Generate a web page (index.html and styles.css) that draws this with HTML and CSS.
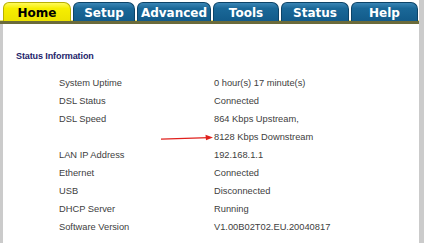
FILE: index.html
```html
<!DOCTYPE html>
<html lang="en">
<head>
    <meta charset="UTF-8">
    <title>ADSL Router - Status</title>
    <link rel="stylesheet" href="styles.css">
</head>
<body>
    <div class="frame">
        <nav class="tabs">
            <a class="tab tab-home" href="#">Home</a>
            <a class="tab tab-setup" href="#">Setup</a>
            <a class="tab tab-advanced" href="#">Advanced</a>
            <a class="tab tab-tools" href="#">Tools</a>
            <a class="tab tab-status" href="#">Status</a>
            <a class="tab tab-help" href="#">Help</a>
        </nav>
        <div class="content">
            <h2 class="section-title">Status Information</h2>
            <div class="info">
                <div class="label">System Uptime</div>
                <div class="value">0 hour(s) 17 minute(s)</div>
                <div class="label">DSL Status</div>
                <div class="value">Connected</div>
                <div class="label">DSL Speed</div>
                <div class="value">864 Kbps Upstream,</div>
                <div class="label">
                    <svg class="arrow" width="54" height="8" viewBox="0 0 54 8">
                        <path d="M1 5.2 L49 3.6" stroke="#e0201c" stroke-width="1.2" fill="none"/>
                        <path d="M53 3.5 L45.5 0.8 L46 6.2 Z" fill="#e0201c"/>
                    </svg>
                </div>
                <div class="value">8128 Kbps Downstream</div>
                <div class="label">LAN IP Address</div>
                <div class="value">192.168.1.1</div>
                <div class="label">Ethernet</div>
                <div class="value">Connected</div>
                <div class="label">USB</div>
                <div class="value">Disconnected</div>
                <div class="label">DHCP Server</div>
                <div class="value">Running</div>
                <div class="label">Software Version</div>
                <div class="value">V1.00B02T02.EU.20040817</div>
            </div>
        </div>
    </div>
</body>
</html>
```

FILE: styles.css
```css
body, html {
    margin: 0;
    padding: 0;
    background-color: #fff;
    height: 100%;
    overflow: hidden;
}

.frame {
    display: flex;
    flex-direction: column;
    height: 100vh;
    border-right: 5px solid #cbcbcb;
    box-sizing: border-box;
}

.tabs {
    display: flex;
    gap: 2px;
    padding: 2px 0 0 3px;
    height: 19px;
    border-bottom: 3px solid #6b6b3a;
    box-shadow: inset 0 -1px 0 #e6e070;
}

.tab {
    display: flex;
    align-items: center;
    justify-content: center;
    font-family: "DejaVu Sans", sans-serif;
    font-weight: bold;
    font-size: 12px;
    color: #fff;
    text-decoration: none;
    background: linear-gradient(#3a86b6, #1a6898 30%, #125b8a);
    border: 1px solid #0c4468;
    border-bottom: none;
    border-radius: 6px 7px 0 0;
    box-sizing: border-box;
    padding-top: 1px;
}

.tab-home {
    width: 68px;
    background: linear-gradient(#fffa5a, #f6ee00 30%, #ece200);
    border-color: #b8b000;
    color: #000;
}

.tab-setup { width: 62px; }
.tab-advanced { width: 74px; }
.tab-tools { width: 66px; }
.tab-status { width: 68px; }
.tab-help { width: 67px; }

.content {
    flex-grow: 1;
    border-left: 3px solid #cbcbcb;
    padding: 26px 0 0 13px;
    font-family: "Liberation Sans", Arial, sans-serif;
}

.section-title {
    margin: 0 0 12px 0;
    font-size: 9px;
    font-weight: bold;
    color: #23236a;
    letter-spacing: -0.1px;
    line-height: 12px;
}

.info {
    display: grid;
    grid-template-columns: 155px auto;
    grid-auto-rows: 18px;
    padding-left: 43px;
    font-size: 9.3px;
    color: #404040;
    line-height: 18px;
}

.label, .value {
    white-space: nowrap;
}

.label {
    position: relative;
}

.arrow {
    position: absolute;
    left: 101px;
    top: 6px;
}
```
